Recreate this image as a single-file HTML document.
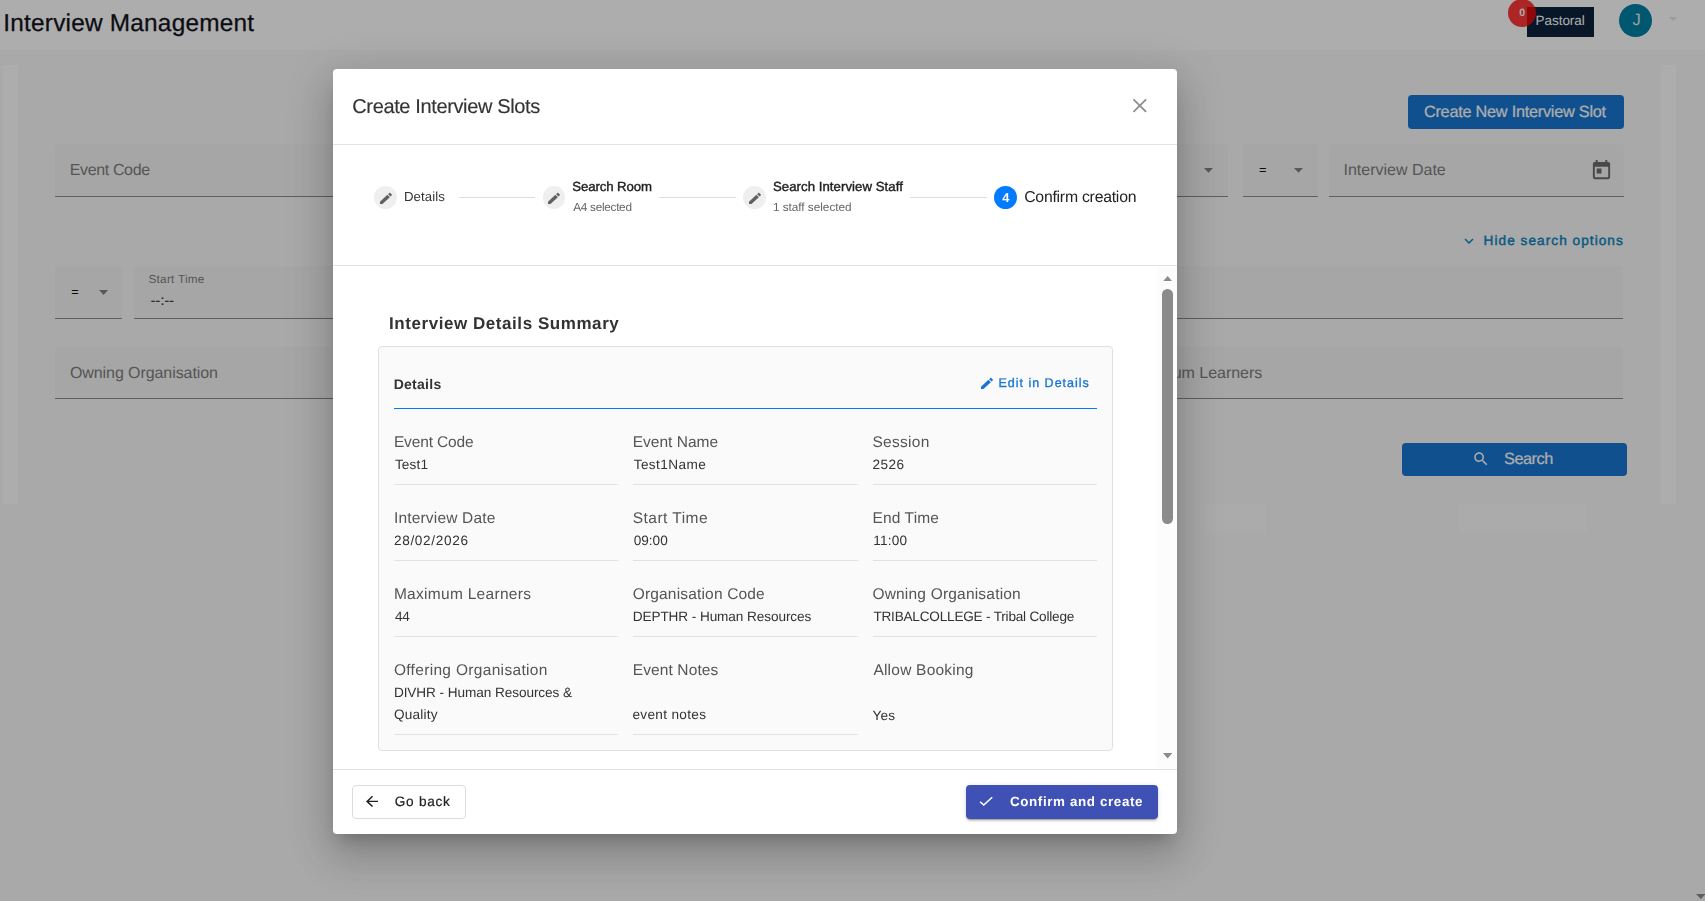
<!DOCTYPE html>
<html lang="en">
<head>
<meta charset="utf-8">
<title>Interview Management</title>
<style>
*{box-sizing:border-box;margin:0;padding:0}
html,body{width:1705px;height:901px;overflow:hidden}
body{position:relative;background:#f9f9fb;font-family:"Liberation Sans",sans-serif}
.a{position:absolute}
.t{position:absolute;white-space:pre;font-family:"Liberation Sans",sans-serif;text-rendering:geometricPrecision}
.fld{position:absolute;background:#f5f5f5;border-bottom:1px solid #8b8b8b;border-radius:4px 4px 0 0}
.tri{position:absolute;width:0;height:0;border-left:4.5px solid transparent;border-right:4.5px solid transparent;border-top:4.8px solid #808080}
.hl{position:absolute;height:1px;background:#e2e2e2}
svg{position:absolute;display:block}
</style>
</head>
<body>
<!-- ================= underlying page ================= -->
<div id="page" class="a" style="left:0;top:0;width:1705px;height:901px">
  <div class="a" style="left:0;top:0;width:1705px;height:50px;background:#fff"></div>
  <div class="a" style="left:1691px;top:50px;width:14px;height:851px;background:#fafafa"></div>
  <svg style="left:1696.0px;top:894.0px" width="9.60" height="5.00" viewBox="0 0 9.60 5.00"><polygon fill="#8b8b8b" points="0,0 9.60,0 4.80,5.00"/></svg>
  <!-- content card -->
  <div class="a" style="left:3px;top:65px;width:1673px;height:439px;background:#fff"></div>
  <div class="a" style="left:18px;top:65px;width:1643px;height:439px;background:#fafafa"></div>
  <div class="a" style="left:1206px;top:504px;width:60px;height:29px;background:#fcfcfd"></div>
  <div class="a" style="left:1459px;top:504px;width:128px;height:29px;background:#fcfcfd"></div>

  <!-- header right -->
  <div class="a" style="left:1527px;top:7px;width:67px;height:29.5px;background:#0c233b"></div>
  <div class="a" style="left:1508px;top:-1px;width:28px;height:28px;border-radius:50%;background:#ff0808;opacity:.8"></div>
  <div class="a" style="left:1619px;top:4px;width:33px;height:33px;border-radius:50%;background:#0081a5"></div>
  <svg style="left:1668.9px;top:17.0px" width="8.10" height="4.00" viewBox="0 0 8.10 4.00"><polygon fill="#e4e4e4" points="0,0 8.10,0 4.05,4.00"/></svg>

  <!-- create button -->
  <div class="a" style="left:1408px;top:95px;width:216px;height:34px;border-radius:4px;background:#1976d2"></div>

  <!-- row 1 fields -->
  <div class="fld" style="left:55px;top:144px;width:585px;height:53px"></div>
  <div class="fld" style="left:655px;top:144px;width:573px;height:53px"></div>
  <svg style="left:1203.7px;top:168.2px" width="9.00" height="4.80" viewBox="0 0 9.00 4.80"><polygon fill="#828282" points="0,0 9.00,0 4.50,4.80"/></svg>
  <div class="fld" style="left:1243px;top:144px;width:75px;height:53px"></div>
  <svg style="left:1293.8px;top:167.9px" width="9.00" height="4.80" viewBox="0 0 9.00 4.80"><polygon fill="#828282" points="0,0 9.00,0 4.50,4.80"/></svg>
  <div class="fld" style="left:1329px;top:144px;width:295px;height:53px"></div>
  <svg style="left:1589.6px;top:158.8px" width="23" height="23" viewBox="0 0 24 24"><path fill="#6c6c6c" d="M19 3h-1V1h-2v2H8V1H6v2H5c-1.11 0-1.99.9-1.99 2L3 19c0 1.1.89 2 2 2h14c1.1 0 2-.9 2-2V5c0-1.1-.9-2-2-2zm0 16H5V8h14v11zM7 10h5v5H7z"/></svg>

  <!-- hide search options chevron -->
  <svg style="left:1459.5px;top:231.5px" width="18" height="18" viewBox="0 0 24 24"><path fill="#0a86c0" d="M16.59 8.59L12 13.17 7.41 8.59 6 10l6 6 6-6z"/></svg>

  <!-- row 2 fields -->
  <div class="fld" style="left:55px;top:266px;width:67px;height:53px"></div>
  <svg style="left:98.5px;top:290.1px" width="9.10" height="4.90" viewBox="0 0 9.10 4.90"><polygon fill="#828282" points="0,0 9.10,0 4.55,4.90"/></svg>
  <div class="fld" style="left:134px;top:266px;width:566px;height:53px"></div>
  <div class="fld" style="left:780px;top:266px;width:843px;height:53px"></div>

  <!-- row 3 fields -->
  <div class="fld" style="left:55px;top:347px;width:775px;height:52px"></div>
  <div class="fld" style="left:1111px;top:347px;width:512px;height:52px"></div>

  <!-- search button -->
  <div class="a" style="left:1402px;top:443px;width:225px;height:33px;border-radius:4px;background:#1976d2"></div>
  <svg style="left:1472.2px;top:450px" width="18" height="18" viewBox="0 0 24 24"><path fill="#fff" d="M15.5 14h-.79l-.28-.27C15.41 12.59 16 11.11 16 9.5 16 5.91 13.09 3 9.5 3S3 5.91 3 9.5 5.91 16 9.5 16c1.61 0 3.09-.59 4.23-1.57l.27.28v.79l5 4.99L20.49 19l-4.99-5zm-6 0C7.01 14 5 11.99 5 9.5S7.01 5 9.5 5 14 7.01 14 9.5 11.99 14 9.5 14z"/></svg>

<div class="t" style="left:3.30px;top:8px;font-size:24.4px;line-height:31px;color:#12121c;letter-spacing:0.211px;-webkit-text-stroke:0.25px #12121c;">Interview Management</div>
<div class="t" style="left:69.70px;top:160px;font-size:16px;line-height:21px;color:#7e7e7e;letter-spacing:-0.356px;">Event Code</div>
<div class="t" style="left:1343.50px;top:160px;font-size:16px;line-height:21px;color:#7e7e7e;">Interview Date</div>
<div class="t" style="left:1259.20px;top:161px;font-size:12px;line-height:18px;color:#111;-webkit-text-stroke:0.25px #111;">=</div>
<div class="t" style="left:1483.60px;top:231px;font-size:13.6px;line-height:19px;color:#0a86c0;letter-spacing:1.056px;-webkit-text-stroke:0.45px #0a86c0;">Hide search options</div>
<div class="t" style="left:71.50px;top:283px;font-size:12px;line-height:18px;color:#111;-webkit-text-stroke:0.25px #111;">=</div>
<div class="t" style="left:148.50px;top:271px;font-size:11.7px;line-height:17px;color:#7e7e7e;letter-spacing:0.289px;">Start Time</div>
<div class="t" style="left:150.70px;top:290px;font-size:14px;line-height:20px;color:#333;letter-spacing:0.200px;-webkit-text-stroke:0.2px #333;">--:--</div>
<div class="t" style="left:69.90px;top:363px;font-size:16px;line-height:21px;color:#7e7e7e;letter-spacing:-0.072px;">Owning Organisation</div>
<div class="t" style="left:1125.80px;top:363px;font-size:16px;line-height:21px;color:#7e7e7e;letter-spacing:-0.033px;">Maximum Learners</div>
<div class="t" style="left:1423.90px;top:101px;font-size:16.3px;line-height:22px;color:#fff;letter-spacing:-0.250px;-webkit-text-stroke:0.2px #fff;">Create New Interview Slot</div>
<div class="t" style="left:1504.10px;top:448px;font-size:16.3px;line-height:22px;color:#fff;letter-spacing:-0.500px;-webkit-text-stroke:0.2px #fff;">Search</div>
<div class="t" style="left:1535.60px;top:11px;font-size:13.5px;line-height:19px;color:#fff;letter-spacing:-0.057px;">Pastoral</div>
<div class="t" style="left:1519.30px;top:5px;font-size:10.6px;line-height:16px;font-weight:700;color:#fff;">0</div>
<div class="t" style="left:1632.60px;top:9px;font-size:16.5px;line-height:22px;color:#e8e8e8;">J</div>
</div>

<!-- ================= backdrop ================= -->
<div class="a" style="left:0;top:0;width:1705px;height:901px;background:rgba(0,0,0,.32)"></div>

<!-- ================= dialog ================= -->
<div id="dlg" class="a" style="left:333px;top:69px;width:844px;height:765px;background:#fff;border-radius:4px;box-shadow:0 11px 15px -7px rgba(0,0,0,.2),0 24px 38px 3px rgba(0,0,0,.13),0 9px 46px 8px rgba(0,0,0,.105)"></div>
<div id="dlgc" class="a" style="left:0;top:0;width:1705px;height:901px;will-change:transform">
  <!-- dividers -->
  <div class="hl" style="left:333px;top:144px;width:844px"></div>
  <div class="hl" style="left:333px;top:265px;width:844px"></div>
  <div class="hl" style="left:333px;top:769px;width:844px"></div>
  <!-- close -->
  <svg style="left:1130px;top:96px" width="20" height="20" viewBox="0 0 20 20"><path d="M3.5 3.4L16.1 15.9M16.1 3.4L3.5 15.9" stroke="#8e8e8e" stroke-width="1.85" fill="none"/></svg>

  <!-- stepper -->
  <div class="a" style="left:374px;top:186px;width:23px;height:23px;border-radius:50%;background:#efefef"></div>
  <div class="a" style="left:542.6px;top:186px;width:22.8px;height:23px;border-radius:50%;background:#efefef"></div>
  <div class="a" style="left:742.9px;top:186px;width:23px;height:23px;border-radius:50%;background:#efefef"></div>
  <div class="a" style="left:994px;top:186px;width:23.2px;height:23.2px;border-radius:50%;background:#007bff"></div>
  <svg style="left:377.8px;top:190.9px" width="16" height="14.9" viewBox="0 0 24 24" preserveAspectRatio="none"><path fill="#616161" d="M3 17.25V21h3.75L17.81 9.94l-3.75-3.75L3 17.25zM20.71 7.04c.39-.39.39-1.02 0-1.41l-2.34-2.34c-.39-.39-1.02-.39-1.41 0l-1.83 1.83 3.75 3.75 1.83-1.83z"/></svg>
  <svg style="left:546.3px;top:190.9px" width="16" height="14.9" viewBox="0 0 24 24" preserveAspectRatio="none"><path fill="#616161" d="M3 17.25V21h3.75L17.81 9.94l-3.75-3.75L3 17.25zM20.71 7.04c.39-.39.39-1.02 0-1.41l-2.34-2.34c-.39-.39-1.02-.39-1.41 0l-1.83 1.83 3.75 3.75 1.83-1.83z"/></svg>
  <svg style="left:746.7px;top:190.9px" width="16" height="14.9" viewBox="0 0 24 24" preserveAspectRatio="none"><path fill="#616161" d="M3 17.25V21h3.75L17.81 9.94l-3.75-3.75L3 17.25zM20.71 7.04c.39-.39.39-1.02 0-1.41l-2.34-2.34c-.39-.39-1.02-.39-1.41 0l-1.83 1.83 3.75 3.75 1.83-1.83z"/></svg>
  <div class="hl" style="left:459px;top:197px;width:76px;background:#dedede"></div>
  <div class="hl" style="left:659px;top:197px;width:77px;background:#dedede"></div>
  <div class="hl" style="left:910px;top:197px;width:77px;background:#dedede"></div>

  <!-- inner scrollbar -->
  <div class="a" style="left:1158px;top:266px;width:19px;height:503px;background:#fcfcfc"></div>
  <svg style="left:1162.9px;top:275.7px" width="9.30" height="5.30" viewBox="0 0 9.30 5.30"><polygon fill="#8b8b8b" points="0,5.30 9.30,5.30 4.65,0"/></svg>
  <div class="a" style="left:1162.2px;top:289px;width:10.8px;height:235px;border-radius:5.4px;background:#8b8b8b"></div>
  <svg style="left:1162.9px;top:753.4px" width="9.30" height="5.50" viewBox="0 0 9.30 5.50"><polygon fill="#8b8b8b" points="0,0 9.30,0 4.65,5.50"/></svg>

  <!-- card -->
  <div class="a" style="left:378px;top:346px;width:735px;height:405px;background:#fafafa;border:1px solid #e0e0e0;border-radius:4px"></div>
  <div class="a" style="left:394px;top:408px;width:703px;height:1px;background:#007bff"></div>
  <svg style="left:979.3px;top:375.9px" width="16" height="14.9" viewBox="0 0 24 24" preserveAspectRatio="none"><path fill="#1976d2" d="M3 17.25V21h3.75L17.81 9.94l-3.75-3.75L3 17.25zM20.71 7.04c.39-.39.39-1.02 0-1.41l-2.34-2.34c-.39-.39-1.02-.39-1.41 0l-1.83 1.83 3.75 3.75 1.83-1.83z"/></svg>
  <!-- row dividers -->
  <div class="hl" style="left:394px;top:484px;width:224px"></div><div class="hl" style="left:633px;top:484px;width:225px"></div><div class="hl" style="left:873px;top:484px;width:224px"></div>
  <div class="hl" style="left:394px;top:560px;width:224px"></div><div class="hl" style="left:633px;top:560px;width:225px"></div><div class="hl" style="left:873px;top:560px;width:224px"></div>
  <div class="hl" style="left:394px;top:636px;width:224px"></div><div class="hl" style="left:633px;top:636px;width:225px"></div><div class="hl" style="left:873px;top:636px;width:224px"></div>
  <div class="hl" style="left:394px;top:734px;width:224px"></div><div class="hl" style="left:633px;top:734px;width:225px"></div>

  <!-- footer buttons -->
  <div class="a" style="left:352px;top:785px;width:114px;height:34px;border:1px solid #dcdcdc;border-radius:4px;background:#fff"></div>
  <svg style="left:362.9px;top:793.2px" width="18" height="16.8" viewBox="0 0 24 24" preserveAspectRatio="none"><path fill="#222" d="M20 11H7.83l5.59-5.59L12 4l-8 8 8 8 1.41-1.41L7.83 13H20v-2z"/></svg>
  <div class="a" style="left:966px;top:785px;width:192px;height:34px;border-radius:4px;background:#3f51b5;box-shadow:0 3px 1px -2px rgba(0,0,0,.2),0 2px 2px 0 rgba(0,0,0,.14),0 1px 5px 0 rgba(0,0,0,.12)"></div>
  <svg style="left:977.4px;top:793.1px" width="18" height="16.5" viewBox="0 0 24 24" preserveAspectRatio="none"><path fill="#fff" d="M9 16.17L4.83 12l-1.42 1.41L9 19 21 7l-1.41-1.41z"/></svg>

<div class="t" style="left:352.30px;top:94px;font-size:20px;line-height:26px;color:#333;letter-spacing:-0.371px;-webkit-text-stroke:0.15px #333;">Create Interview Slots</div>
<div class="t" style="left:404.00px;top:187px;font-size:13.2px;line-height:19px;color:#333;letter-spacing:0.100px;">Details</div>
<div class="t" style="left:572.30px;top:177px;font-size:13.2px;line-height:19px;color:#222;letter-spacing:-0.100px;-webkit-text-stroke:0.4px #222;">Search Room</div>
<div class="t" style="left:573.30px;top:198px;font-size:11.8px;line-height:18px;color:#666;letter-spacing:-0.300px;">A4 selected</div>
<div class="t" style="left:772.90px;top:177px;font-size:13.2px;line-height:19px;color:#222;letter-spacing:0.057px;-webkit-text-stroke:0.4px #222;">Search Interview Staff</div>
<div class="t" style="left:772.90px;top:198px;font-size:11.8px;line-height:18px;color:#666;letter-spacing:-0.027px;">1 staff selected</div>
<div class="t" style="left:1002.20px;top:188px;font-size:12.8px;line-height:19px;font-weight:700;color:#fff;">4</div>
<div class="t" style="left:1024.20px;top:187px;font-size:15.8px;line-height:21px;color:#222;letter-spacing:-0.240px;">Confirm creation</div>
<div class="t" style="left:389.00px;top:312px;font-size:17px;line-height:23px;font-weight:700;color:#333;letter-spacing:0.558px;">Interview Details Summary</div>
<div class="t" style="left:393.70px;top:374px;font-size:14px;line-height:20px;font-weight:700;color:#333;letter-spacing:0.267px;">Details</div>
<div class="t" style="left:998.40px;top:374px;font-size:12.5px;line-height:18px;color:#1976d2;letter-spacing:1.000px;-webkit-text-stroke:0.35px #1976d2;">Edit in Details</div>
<div class="t" style="left:393.90px;top:432px;font-size:15.5px;line-height:21px;color:#555;letter-spacing:-0.144px;">Event Code</div>
<div class="t" style="left:394.90px;top:455px;font-size:13.6px;line-height:19px;color:#333;letter-spacing:0.175px;">Test1</div>
<div class="t" style="left:632.70px;top:432px;font-size:15.5px;line-height:21px;color:#555;letter-spacing:0.022px;">Event Name</div>
<div class="t" style="left:633.70px;top:455px;font-size:13.6px;line-height:19px;color:#333;letter-spacing:0.412px;">Test1Name</div>
<div class="t" style="left:872.40px;top:432px;font-size:15.5px;line-height:21px;color:#555;letter-spacing:0.300px;">Session</div>
<div class="t" style="left:872.40px;top:455px;font-size:13.6px;line-height:19px;color:#333;letter-spacing:0.500px;">2526</div>
<div class="t" style="left:393.90px;top:508px;font-size:15.5px;line-height:21px;color:#555;letter-spacing:0.185px;">Interview Date</div>
<div class="t" style="left:393.90px;top:531px;font-size:13.6px;line-height:19px;color:#333;letter-spacing:0.689px;">28/02/2026</div>
<div class="t" style="left:632.70px;top:508px;font-size:15.5px;line-height:21px;color:#555;letter-spacing:0.478px;">Start Time</div>
<div class="t" style="left:633.70px;top:531px;font-size:13.6px;line-height:19px;color:#333;">09:00</div>
<div class="t" style="left:872.40px;top:508px;font-size:15.5px;line-height:21px;color:#555;letter-spacing:0.157px;">End Time</div>
<div class="t" style="left:873.30px;top:531px;font-size:13.6px;line-height:19px;color:#333;letter-spacing:0.200px;">11:00</div>
<div class="t" style="left:393.90px;top:584px;font-size:15.5px;line-height:21px;color:#555;letter-spacing:0.293px;">Maximum Learners</div>
<div class="t" style="left:394.90px;top:607px;font-size:13.6px;line-height:19px;color:#333;letter-spacing:-0.200px;">44</div>
<div class="t" style="left:632.70px;top:584px;font-size:15.5px;line-height:21px;color:#555;letter-spacing:0.175px;">Organisation Code</div>
<div class="t" style="left:632.70px;top:607px;font-size:13.6px;line-height:19px;color:#333;letter-spacing:-0.083px;">DEPTHR - Human Resources</div>
<div class="t" style="left:872.40px;top:584px;font-size:15.5px;line-height:21px;color:#555;letter-spacing:0.200px;">Owning Organisation</div>
<div class="t" style="left:873.40px;top:607px;font-size:13.6px;line-height:19px;color:#333;letter-spacing:-0.210px;">TRIBALCOLLEGE - Tribal College</div>
<div class="t" style="left:393.90px;top:660px;font-size:15.5px;line-height:21px;color:#555;letter-spacing:0.320px;">Offering Organisation</div>
<div class="t" style="left:632.70px;top:660px;font-size:15.5px;line-height:21px;color:#555;letter-spacing:0.120px;">Event Notes</div>
<div class="t" style="left:873.40px;top:660px;font-size:15.5px;line-height:21px;color:#555;letter-spacing:0.225px;">Allow Booking</div>
<div class="t" style="left:393.90px;top:683px;font-size:13.6px;line-height:19px;color:#333;letter-spacing:-0.067px;">DIVHR - Human Resources &amp;</div>
<div class="t" style="left:393.90px;top:705px;font-size:13.6px;line-height:19px;color:#333;letter-spacing:0.233px;">Quality</div>
<div class="t" style="left:632.40px;top:705px;font-size:13.6px;line-height:19px;color:#333;letter-spacing:0.330px;">event notes</div>
<div class="t" style="left:872.40px;top:706px;font-size:13.6px;line-height:19px;color:#333;letter-spacing:0.200px;">Yes</div>
<div class="t" style="left:394.80px;top:792px;font-size:13.6px;line-height:19px;color:#222;letter-spacing:0.750px;-webkit-text-stroke:0.2px #222;">Go back</div>
<div class="t" style="left:1009.90px;top:792px;font-size:13.4px;line-height:19px;font-weight:700;color:#fff;letter-spacing:0.624px;">Confirm and create</div>
</div>
</body>
</html>
